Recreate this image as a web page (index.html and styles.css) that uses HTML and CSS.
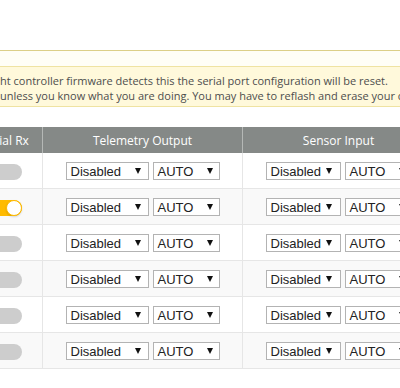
FILE: index.html
```html
<!DOCTYPE html>
<html lang="en">
  <head>
    <meta charset="UTF-8" />
    <meta name="viewport" content="width=device-width, initial-scale=1.0" />
    <title>Ports</title>
    <link rel="stylesheet" href="styles.css">
  </head>

  <body>
    <div id="page">
      <div class="note-wrap">
        <div class="note">
          <p>ht controller firmware detects this the serial port configuration will be reset.</p>
          <p>unless you know what you are doing. You may have to reflash and erase your configuration if you do.</p>
        </div>
      </div>

      <table class="ports">
        <thead>
          <tr>
            <th class="col-rx"><span class="rx-label">Serial Rx</span></th>
            <th class="col-tel">Telemetry Output</th>
            <th class="col-sens">Sensor Input</th>
          </tr>
        </thead>
        <tbody>
          <tr>
            <td><span class="toggle"></span></td>
            <td><div class="pair"><span class="sel w83">Disabled<i></i></span><span class="sel w67">AUTO<i></i></span></div></td>
            <td><div class="pair"><span class="sel w75">Disabled<i></i></span><span class="sel w67">AUTO<i></i></span></div></td>
          </tr>
          <tr>
            <td><span class="toggle on"></span></td>
            <td><div class="pair"><span class="sel w83">Disabled<i></i></span><span class="sel w67">AUTO<i></i></span></div></td>
            <td><div class="pair"><span class="sel w75">Disabled<i></i></span><span class="sel w67">AUTO<i></i></span></div></td>
          </tr>
          <tr>
            <td><span class="toggle"></span></td>
            <td><div class="pair"><span class="sel w83">Disabled<i></i></span><span class="sel w67">AUTO<i></i></span></div></td>
            <td><div class="pair"><span class="sel w75">Disabled<i></i></span><span class="sel w67">AUTO<i></i></span></div></td>
          </tr>
          <tr>
            <td><span class="toggle"></span></td>
            <td><div class="pair"><span class="sel w83">Disabled<i></i></span><span class="sel w67">AUTO<i></i></span></div></td>
            <td><div class="pair"><span class="sel w75">Disabled<i></i></span><span class="sel w67">AUTO<i></i></span></div></td>
          </tr>
          <tr>
            <td><span class="toggle"></span></td>
            <td><div class="pair"><span class="sel w83">Disabled<i></i></span><span class="sel w67">AUTO<i></i></span></div></td>
            <td><div class="pair"><span class="sel w75">Disabled<i></i></span><span class="sel w67">AUTO<i></i></span></div></td>
          </tr>
          <tr>
            <td><span class="toggle"></span></td>
            <td><div class="pair"><span class="sel w83">Disabled<i></i></span><span class="sel w67">AUTO<i></i></span></div></td>
            <td><div class="pair"><span class="sel w75">Disabled<i></i></span><span class="sel w67">AUTO<i></i></span></div></td>
          </tr>
        </tbody>
      </table>
    </div>
  </body>
</html>
```

FILE: styles.css
```css
body {
  margin: 0;
  background-color: #fff;
  font-family: "Open Sans", sans-serif;
  overflow: hidden;
}

#page {
  width: 400px;
  padding-top: 50px;
}

.note-wrap {
  border-top: 1px solid #dccf88;
  background-color: #fffef6;
  padding-top: 15px;
}

.note {
  border-top: 1px solid #efe3a2;
  border-bottom: 1px solid #efe3a2;
  background-color: #fff9db;
  padding: 6px 0 3px 0;
  white-space: nowrap;
  overflow: hidden;
}

.note p {
  margin: 0;
  font-size: 11px;
  line-height: 15px;
  color: #4d4d4d;
}

.ports {
  margin-top: 20px;
  margin-left: -42px;
  border-collapse: collapse;
  table-layout: fixed;
  width: 474px;
}

.ports th {
  background-color: #858987;
  color: #fff;
  font-weight: normal;
  font-size: 12px;
  height: 26px;
  padding: 0;
  text-align: center;
}

.ports th + th {
  border-left: 1px solid #b5b8b6;
}

.col-rx {
  width: 84px;
}

.rx-label {
  display: inline-block;
  padding-left: 10px;
}

.col-tel {
  width: 199px;
}

.col-sens {
  width: 191px;
}

.ports td {
  height: 35px;
  padding: 0;
  text-align: center;
  border-bottom: 1px solid #e6e6e6;
}

.ports td + td {
  border-left: 1px solid #e6e6e6;
}

.ports tbody tr:nth-child(even) td {
  background-color: #f9f9f9;
}

.toggle {
  display: inline-block;
  vertical-align: middle;
  width: 44px;
  height: 16px;
  border-radius: 8px;
  background-color: #cdcdcd;
  position: relative;
}

.toggle.on {
  background-color: #ffbb00;
}

.toggle.on::after {
  content: "";
  position: absolute;
  right: 0;
  top: 0;
  width: 14px;
  height: 14px;
  border-radius: 50%;
  background-color: #fff;
  border: 1px solid #ffbb00;
  box-shadow: 0 1px 2px rgba(0, 0, 0, 0.15);
}

.pair {
  display: flex;
  justify-content: center;
  gap: 4px;
  padding-top: 1px;
}

.sel {
  display: flex;
  align-items: center;
  justify-content: space-between;
  box-sizing: border-box;
  height: 18px;
  padding: 0 7px 0 4px;
  border: 1px solid #b3b3b3;
  background-color: #fff;
  font-family: "Liberation Sans", Arial, sans-serif;
  font-size: 13px;
  color: #222;
}

.sel i {
  width: 0;
  height: 0;
  border-left: 3px solid transparent;
  border-right: 3px solid transparent;
  border-top: 6px solid #111;
}

.w83 {
  width: 83px;
}

.w75 {
  width: 75px;
  padding-right: 8px;
}

.w67 {
  width: 67px;
  padding-right: 6px;
}
```
